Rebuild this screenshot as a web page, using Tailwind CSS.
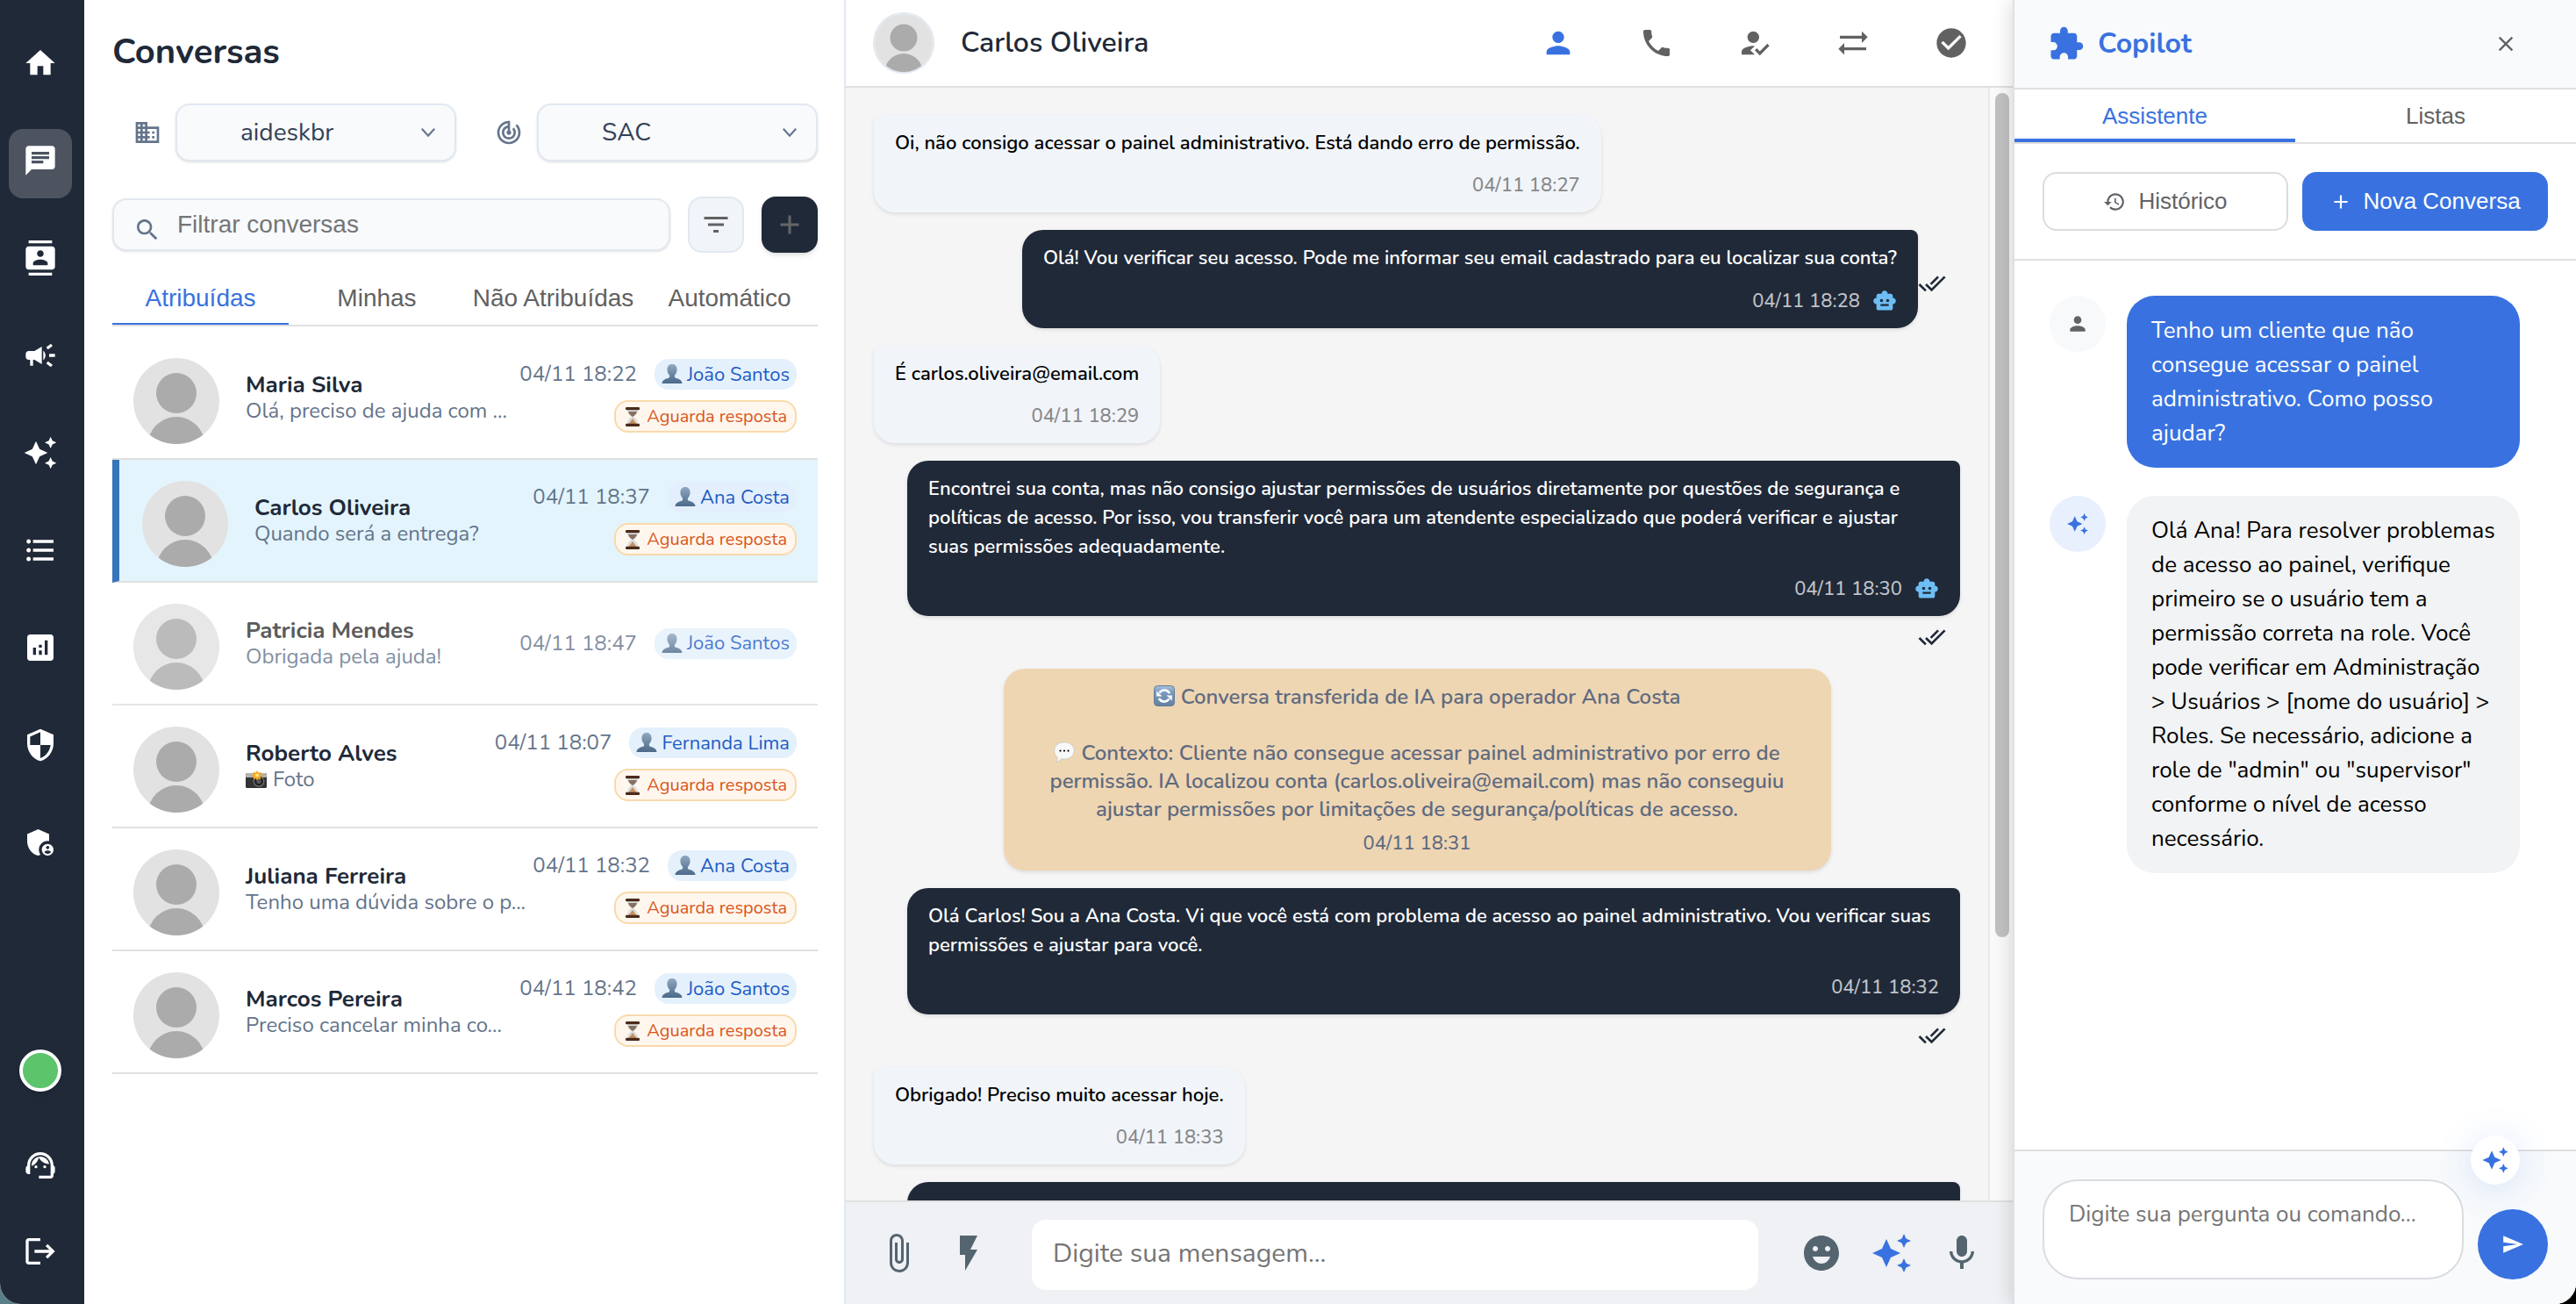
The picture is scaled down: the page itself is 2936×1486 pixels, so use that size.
<!DOCTYPE html>
<html lang="pt-BR">
<head>
    <meta charset="UTF-8">
    <meta name="viewport" content="width=device-width, initial-scale=1.0">
    <title>Conversas</title>
    <script src="https://cdn.jsdelivr.net/npm/@tailwindcss/browser@4"></script>
</head>
<body class="h-[1486px] w-[2936px] overflow-hidden bg-linear-to-r from-[#5b7f88] to-black font-['Nunito','Lato',sans-serif]">
    <!-- icons -->
    <svg class="absolute size-0">
        <symbol id="home" viewBox="0 0 24 24"><path d="M10 20v-6h4v6h5v-8h3L12 3 2 12h3v8z"/></symbol>
        <symbol id="chat" viewBox="0 0 24 24"><path d="M20 2H4c-1.1 0-1.99.9-1.99 2L2 22l4-4h14c1.1 0 2-.9 2-2V4c0-1.1-.9-2-2-2zM6 9h12v2H6V9zm8 5H6v-2h8v2zm4-6H6V6h12v2z"/></symbol>
        <symbol id="contacts" viewBox="0 0 24 24"><path d="M20 0H4v2h16V0zM4 24h16v-2H4v2zM20 4H4c-1.1 0-2 .9-2 2v12c0 1.1.9 2 2 2h16c1.1 0 2-.9 2-2V6c0-1.1-.9-2-2-2zm-8 2.75c1.24 0 2.25 1.01 2.25 2.25s-1.01 2.25-2.25 2.25S9.75 10.24 9.75 9 10.76 6.75 12 6.75zM17 17H7v-1.5c0-1.67 3.33-2.5 5-2.5s5 .83 5 2.5V17z"/></symbol>
        <symbol id="campaign" viewBox="0 0 24 24"><path d="M18 11v2h4v-2h-4zm-2 6.61c.96.71 2.21 1.65 3.2 2.39.4-.53.8-1.07 1.2-1.6-.99-.74-2.24-1.68-3.2-2.4-.4.54-.8 1.08-1.2 1.61zM20.4 5.6c-.4-.53-.8-1.07-1.2-1.6-.99.74-2.24 1.68-3.2 2.4.4.53.8 1.07 1.2 1.6.96-.72 2.21-1.65 3.2-2.4zM4 9c-1.1 0-2 .9-2 2v2c0 1.1.9 2 2 2h1v4h2v-4h1l5 3V6L8 9H4zm11.5 3c0-1.33-.58-2.53-1.5-3.35v6.69c.92-.81 1.5-2.01 1.5-3.34z"/></symbol>
        <symbol id="sparkle" viewBox="0 0 24 24"><path d="M19 9l1.25-2.75L23 5l-2.75-1.25L19 1l-1.25 2.75L15 5l2.75 1.25L19 9zm-7.5.5L9 4 6.5 9.5 1 12l5.5 2.5L9 20l2.5-5.5L17 12l-5.5-2.5zM19 15l-1.25 2.75L15 19l2.75 1.25L19 23l1.25-2.75L23 19l-2.75-1.25L19 15z"/></symbol>
        <symbol id="list" viewBox="0 0 24 24"><path d="M4 10.5c-.83 0-1.5.67-1.5 1.5s.67 1.5 1.5 1.5 1.5-.67 1.5-1.5-.67-1.5-1.5-1.5zm0-6c-.83 0-1.5.67-1.5 1.5S3.17 7.5 4 7.5 5.5 6.83 5.5 6 4.83 4.5 4 4.5zm0 12c-.83 0-1.5.68-1.5 1.5s.68 1.5 1.5 1.5 1.5-.68 1.5-1.5-.67-1.5-1.5-1.5zM7 19h14v-2H7v2zm0-6h14v-2H7v2zm0-8v2h14V5H7z"/></symbol>
        <symbol id="analytics" viewBox="0 0 24 24"><path d="M19 3H5c-1.1 0-2 .9-2 2v14c0 1.1.9 2 2 2h14c1.1 0 2-.9 2-2V5c0-1.1-.9-2-2-2zM9 17H7v-5h2v5zm4 0h-2v-3h2v3zm0-5h-2v-2h2v2zm4 5h-2V7h2v10z"/></symbol>
        <symbol id="security" viewBox="0 0 24 24"><path d="M12 1L3 5v6c0 5.55 3.84 10.74 9 12 5.16-1.26 9-6.45 9-12V5l-9-4zm0 10.99h7c-.53 4.12-3.28 7.79-7 8.94V12H5V6.3l7-3.11v8.8z"/></symbol>
        <symbol id="admin" viewBox="0 0 24 24"><path d="M17 11c.34 0 .67.04 1 .09V6.27L10.5 3 3 6.27v4.91c0 4.54 3.2 8.79 7.5 9.82.55-.13 1.08-.32 1.6-.55-.69-.98-1.1-2.17-1.1-3.45 0-3.31 2.69-6 6-6z"/><path d="M17 13c-2.21 0-4 1.79-4 4s1.79 4 4 4 4-1.79 4-4-1.79-4-4-4zm0 1.38c.62 0 1.12.51 1.12 1.12s-.51 1.12-1.12 1.12-1.12-.51-1.12-1.12.5-1.12 1.12-1.12zm0 5.37c-.93 0-1.74-.46-2.24-1.17.05-.72 1.51-1.08 2.24-1.08s2.19.36 2.24 1.08c-.5.71-1.31 1.17-2.24 1.17z"/></symbol>
        <symbol id="support" viewBox="0 0 24 24"><path d="M21 12.22C21 6.73 16.74 3 12 3c-4.69 0-9 3.65-9 9.28-.6.34-1 .98-1 1.72v2c0 1.1.9 2 2 2h1v-6.1c0-3.87 3.13-7 7-7s7 3.13 7 7V19h-8v2h8c1.1 0 2-.9 2-2v-1.22c.59-.31 1-.92 1-1.64v-2.3c0-.7-.41-1.31-1-1.62z"/><circle cx="9" cy="13" r="1"/><circle cx="15" cy="13" r="1"/><path d="M18 11.03C17.52 8.18 15.04 6 12.05 6c-3.03 0-6.29 2.51-6.03 6.45 2.47-1.01 4.33-3.21 4.86-5.89 1.31 2.63 4 4.44 7.12 4.47z"/></symbol>
        <symbol id="logout" viewBox="0 0 24 24"><path d="M17 7l-1.41 1.41L18.17 11H8v2h10.17l-2.58 2.58L17 17l5-5zM4 5h8V3H4c-1.1 0-2 .9-2 2v14c0 1.1.9 2 2 2h8v-2H4V5z"/></symbol>
        <symbol id="business" viewBox="0 0 24 24"><path d="M12 7V3H2v18h20V7H12zM6 19H4v-2h2v2zm0-4H4v-2h2v2zm0-4H4V9h2v2zm0-4H4V5h2v2zm4 12H8v-2h2v2zm0-4H8v-2h2v2zm0-4H8V9h2v2zm0-4H8V5h2v2zm10 12h-8v-2h2v-2h-2v-2h2v-2h-2V9h8v10zm-2-8h-2v2h2v-2zm0 4h-2v2h2v-2z"/></symbol>
        <symbol id="track" viewBox="0 0 24 24"><path d="M19.07 4.93l-1.41 1.41C19.1 7.79 20 9.79 20 12c0 4.42-3.58 8-8 8s-8-3.58-8-8c0-4.08 3.05-7.44 7-7.93v2.02C8.16 6.57 6 9.03 6 12c0 3.31 2.69 6 6 6s6-2.69 6-6c0-1.66-.67-3.16-1.76-4.24l-1.41 1.41C15.55 9.9 16 10.9 16 12c0 2.21-1.79 4-4 4s-4-1.79-4-4c0-1.86 1.28-3.41 3-3.86v2.14c-.6.35-1 .98-1 1.72 0 1.1.9 2 2 2s2-.9 2-2c0-.74-.4-1.38-1-1.72V2h-1C6.48 2 2 6.48 2 12s4.48 10 10 10 10-4.48 10-10c0-2.76-1.12-5.26-2.93-7.07z"/></symbol>
        <symbol id="chevron" viewBox="0 0 24 24"><path d="M6.6 8.8l5.4 6 5.4-6" fill="none" stroke="currentColor" stroke-width="1.6"/></symbol>
        <symbol id="search" viewBox="0 0 24 24"><path d="M15.5 14h-.79l-.28-.27C15.41 12.59 16 11.11 16 9.5 16 5.91 13.09 3 9.5 3S3 5.91 3 9.5 5.91 16 9.5 16c1.61 0 3.09-.59 4.23-1.57l.27.28v.79l5 4.99L20.49 19l-4.99-5zm-6 0C7.01 14 5 11.99 5 9.5S7.01 5 9.5 5 14 7.01 14 9.5 11.99 14 9.5 14z"/></symbol>
        <symbol id="filter" viewBox="0 0 24 24"><path d="M10 18h4v-2h-4v2zM3 6v2h18V6H3zm3 7h12v-2H6v2z"/></symbol>
        <symbol id="plus" viewBox="0 0 24 24"><path d="M19 13h-6v6h-2v-6H5v-2h6V5h2v6h6v2z"/></symbol>
        <symbol id="person" viewBox="0 0 24 24"><path d="M12 12c2.21 0 4-1.79 4-4s-1.79-4-4-4-4 1.79-4 4 1.79 4 4 4zm0 2c-2.67 0-8 1.34-8 4v2h16v-2c0-2.66-5.33-4-8-4z"/></symbol>
        <symbol id="phone" viewBox="0 0 24 24"><path d="M6.62 10.79c1.44 2.83 3.76 5.14 6.59 6.59l2.2-2.2c.27-.27.67-.36 1.02-.24 1.12.37 2.33.57 3.57.57.55 0 1 .45 1 1V20c0 .55-.45 1-1 1-9.39 0-17-7.61-17-17 0-.55.45-1 1-1h3.5c.55 0 1 .45 1 1 0 1.25.2 2.45.57 3.57.11.35.03.74-.25 1.02l-2.2 2.2z"/></symbol>
        <symbol id="reg" viewBox="0 0 24 24"><path d="M9 17l3-2.94c-.39-.04-.68-.06-1-.06-2.67 0-8 1.34-8 4v2h9l-3-3zm2-5c2.21 0 4-1.79 4-4s-1.79-4-4-4-4 1.79-4 4 1.79 4 4 4"/><path d="M15.47 20.5L12 17l1.4-1.41 2.07 2.08 5.13-5.17 1.4 1.41z"/></symbol>
        <symbol id="swap" viewBox="0 0 24 24"><path d="M22 8l-4-4v3H3v2h15v3l4-4zM2 16l4 4v-3h15v-2H6v-3l-4 4z"/></symbol>
        <symbol id="check" viewBox="0 0 24 24"><path d="M12 2C6.48 2 2 6.48 2 12s4.48 10 10 10 10-4.48 10-10S17.52 2 12 2zm-2 15l-5-5 1.41-1.41L10 14.17l7.59-7.59L19 8l-9 9z"/></symbol>
        <symbol id="done" viewBox="0 0 24 24"><path d="M18 7l-1.41-1.41-6.34 6.34 1.41 1.41L18 7zm4.24-1.41L11.66 16.17 7.48 12l-1.41 1.41L11.66 19l12-12-1.42-1.41zM.41 13.41L6 19l1.41-1.41L1.83 12 .41 13.41z"/></symbol>
        <symbol id="bot" viewBox="0 0 24 24"><path d="M20 9V7c0-1.1-.9-2-2-2h-3c0-1.66-1.34-3-3-3S9 3.34 9 5H6c-1.1 0-2 .9-2 2v2c-1.66 0-3 1.34-3 3s1.34 3 3 3v4c0 1.1.9 2 2 2h12c1.1 0 2-.9 2-2v-4c1.66 0 3-1.34 3-3s-1.34-3-3-3zM7.5 11.5c0-.83.67-1.5 1.5-1.5s1.5.67 1.5 1.5S9.83 13 9 13s-1.5-.67-1.5-1.5zM16 17H8v-2h8v2zm-1-4c-.83 0-1.5-.67-1.5-1.5S14.17 10 15 10s1.5.67 1.5 1.5S15.83 13 15 13z"/></symbol>
        <symbol id="attach" viewBox="0 0 24 24"><path d="M16.5 6v11.5c0 2.21-1.79 4-4 4s-4-1.79-4-4V5c0-1.38 1.12-2.5 2.5-2.5s2.5 1.12 2.5 2.5v10.5c0 .55-.45 1-1 1s-1-.45-1-1V6H10v9.5c0 1.38 1.12 2.5 2.5 2.5s2.5-1.12 2.5-2.5V5c0-2.21-1.79-4-4-4S7 2.79 7 5v12.5c0 3.04 2.46 5.5 5.5 5.5s5.5-2.46 5.5-5.5V6h-1.5z"/></symbol>
        <symbol id="flash" viewBox="0 0 24 24"><path d="M7 2v11h3v9l7-12h-4l4-8z"/></symbol>
        <symbol id="emoji" viewBox="0 0 24 24"><path d="M11.99 2C6.47 2 2 6.48 2 12s4.47 10 9.99 10C17.52 22 22 17.52 22 12S17.52 2 11.99 2zM8.5 8c.83 0 1.5.67 1.5 1.5S9.33 11 8.5 11 7 10.33 7 9.5 7.67 8 8.5 8zM12 18c-2.28 0-4.22-1.66-5-4h10c-.78 2.34-2.72 4-5 4zm3.5-7c-.83 0-1.5-.67-1.5-1.5S14.67 8 15.5 8s1.5.67 1.5 1.5-.67 1.5-1.5 1.5z"/></symbol>
        <symbol id="mic" viewBox="0 0 24 24"><path d="M12 14c1.66 0 2.99-1.34 2.99-3L15 5c0-1.66-1.34-3-3-3S9 3.34 9 5v6c0 1.66 1.34 3 3 3zm5.3-3c0 3-2.54 5.1-5.3 5.1S6.7 14 6.7 11H5c0 3.41 2.72 6.23 6 6.72V21h2v-3.28c3.28-.48 6-3.3 6-6.72h-1.7z"/></symbol>
        <symbol id="puzzle" viewBox="0 0 24 24"><path d="M20.5 11H19V7c0-1.1-.9-2-2-2h-4V3.5C13 2.12 11.88 1 10.5 1S8 2.12 8 3.5V5H4c-1.1 0-1.99.9-1.99 2v3.8H3.5c1.49 0 2.7 1.21 2.7 2.7s-1.21 2.7-2.7 2.7H2V20c0 1.1.9 2 2 2h3.8v-1.5c0-1.49 1.21-2.7 2.7-2.7 1.49 0 2.7 1.21 2.7 2.7V22H17c1.1 0 2-.9 2-2v-4h1.5c1.38 0 2.5-1.12 2.5-2.5S21.88 11 20.5 11z"/></symbol>
        <symbol id="close" viewBox="0 0 24 24"><path d="M19 6.41L17.59 5 12 10.59 6.41 5 5 6.41 10.59 12 5 17.59 6.41 19 12 13.41 17.59 19 19 17.59 13.41 12z"/></symbol>
        <symbol id="history" viewBox="0 0 24 24"><path d="M13 3c-4.97 0-9 4.03-9 9H1l3.89 3.89.07.14L9 12H6c0-3.87 3.13-7 7-7s7 3.13 7 7-3.13 7-7 7c-1.93 0-3.68-.79-4.94-2.06l-1.42 1.42C8.27 19.99 10.51 21 13 21c4.97 0 9-4.03 9-9s-4.03-9-9-9zm-1 5v5l4.28 2.54.72-1.21-3.5-2.08V8H12z"/></symbol>
        <symbol id="send" viewBox="0 0 24 24"><path d="M2.01 21L23 12 2.01 3 2 10l15 2-15 2z"/></symbol>
        <symbol id="avatar" viewBox="0 0 98 98">
            <rect width="98" height="98" fill="#e2e2e2"/><circle cx="49" cy="40" r="23" fill="#ababab"/><circle cx="49" cy="99.5" r="32.5" fill="#ababab"/>
        </symbol>
        <!-- small coloured pictograms -->
        <linearGradient id="bustFill" x2="0" y2="1"><stop stop-color="#90a8bf"/><stop offset="1" stop-color="#4c6989"/></linearGradient>
        <symbol id="bust" viewBox="0 0 24 24"><path fill="url(#bustFill)" d="M12 1c3.6 0 5.6 2.6 5.6 6.200 0 2.300-.9 4.600-2.300 6 -.7.8-.6 2.600.3 3.200C18.500 17.600 23.300 18 23.500 23H.5C.7 18 5.500 17.600 8.400 16.400c.9-.6 1-2.400.3-3.200C7.300 11.800 6.400 9.500 6.400 7.200 6.400 3.600 8.400 1 12 1z"/></symbol>
        <symbol id="hourglass" viewBox="0 0 16 22"><path fill="#d9dee2" d="M2 3h12c0 4-2 6-5 8 3 2 5 4 5 8H2c0-4 2-6 5-8-3-2-5-4-5-8z"/><path fill="#6b4a32" d="M3 5h10c-.6 2.500-2.500 4.300-5 6-2.500-1.700-4.400-3.500-5-6z" opacity=".75"/><path fill="#c98f5c" d="M8 13l4.500 6h-9z"/><rect width="16" height="3.200" rx="1.200" fill="#4a2a1c"/><rect y="18.800" width="16" height="3.200" rx="1.200" fill="#4a2a1c"/></symbol>
        <symbol id="camera" viewBox="0 0 24 20"><rect x="0" y="3" width="24" height="17" rx="1.500" fill="#333"/><rect x="0" y="3" width="24" height="5" rx="1.500" fill="#b5b3ae"/><circle cx="15" cy="12.500" r="6.500" fill="#6b6b6b"/><circle cx="15" cy="12.500" r="5" fill="#222"/><circle cx="15" cy="12.500" r="2.600" fill="#55585c"/><path fill="#f7a823" d="M13 0l1.500 2.600 3-.9-.8 3 2.800 1.300-2.800 1.400.6 2.800-2.900-.8L13 11.500l-1.400-2.300-2.900.8.6-2.800L6.500 5.800l2.800-1.300-.8-3 3 .9z"/><circle cx="13" cy="5.500" r="2" fill="#ffe680"/></symbol>
        <linearGradient id="syncFill" x2="0" y2="1"><stop stop-color="#a9c3de"/><stop offset=".3" stop-color="#7d9cc0"/><stop offset="1" stop-color="#647f9f"/></linearGradient>
        <symbol id="sync" viewBox="0 0 24 24"><rect x=".5" y=".5" width="23" height="23" rx="4" fill="url(#syncFill)" stroke="#5f7c9c"/><g fill="none" stroke="#fff" stroke-width="2.600"><path d="M6.500 8.600A6.600 6.600 0 0 1 18 9.200"/><path d="M17.500 15.400A6.600 6.600 0 0 1 6 14.800"/></g><path fill="#fff" d="M3.200 6.500v6h6.300zM20.800 17.500v-6h-6.300z"/></symbol>
        <symbol id="balloon" viewBox="0 0 24 24"><path fill="#f7f8f8" stroke="#c3c3c0" stroke-width=".7" d="M12 .8c6.400 0 11.300 4.200 11.300 9.600S18.400 20 12 20c-1.300 0-2.200-.1-3.300-.4C7.200 21.600 5 23 2.300 23.300c1.500-1.500 2.200-3.200 1.900-5.400C2 16.200.7 13.500.7 10.400.7 5 5.600.8 12 .8z"/><circle cx="7.500" cy="10.600" r="1.100"/><circle cx="12" cy="10.600" r="1.100"/><circle cx="16.500" cy="10.600" r="1.100"/></symbol>
    </svg>

    <div class="flex h-full overflow-hidden rounded-b-[24px] bg-white">
        <!-- sidebar -->
        <nav class="flex w-24 shrink-0 flex-col bg-[#202938] pt-9 pl-[10px] fill-white">
            <div class="flex w-[72px] flex-col gap-8">
                <a class="flex h-[79px] items-center justify-center pb-[7px]"><svg class="size-10"><use href="#home"/></svg></a>
                <a class="flex h-[79px] items-center justify-center rounded-2xl bg-[#4d5460] pb-[7px]"><svg class="size-10"><use href="#chat"/></svg></a>
                <a class="flex h-[79px] items-center justify-center pb-[7px]"><svg class="size-10"><use href="#contacts"/></svg></a>
                <a class="flex h-[79px] items-center justify-center pb-[7px]"><svg class="size-10"><use href="#campaign"/></svg></a>
                <a class="flex h-[79px] items-center justify-center pb-[7px]"><svg class="size-10"><use href="#sparkle"/></svg></a>
                <a class="flex h-[79px] items-center justify-center pb-[7px]"><svg class="size-10"><use href="#list"/></svg></a>
                <a class="flex h-[79px] items-center justify-center pb-[7px]"><svg class="size-10"><use href="#analytics"/></svg></a>
                <a class="flex h-[79px] items-center justify-center pb-[7px]"><svg class="size-10"><use href="#security"/></svg></a>
                <a class="flex h-[79px] items-center justify-center pb-[7px]"><svg class="size-10"><use href="#admin"/></svg></a>
            </div>
            <div class="mt-auto flex w-[72px] flex-col items-center pb-10">
                <span class="size-12 rounded-full border-4 border-white bg-[#5cc46b] shadow-md"></span>
                <svg class="mt-16 size-10"><use href="#support"/></svg>
                <svg class="mt-[58px] size-10"><use href="#logout"/></svg>
            </div>
        </nav>

        <!-- conversation list -->
        <section class="w-[868px] shrink-0 border-r-2 border-[#e2e8f0] pt-8 pr-[30px] pl-8">
            <h1 class="text-[40px] leading-[54px] font-bold text-[#202938]">Conversas</h1>
            <div class="mt-8 flex items-center pl-6">
                <svg class="mr-4 size-8 fill-[#64748b]"><use href="#business"/></svg>
                <div class="flex h-[66px] w-[320px] items-center justify-between rounded-2xl border-2 border-[#e2e8f0] bg-[#f8fafc] pr-[14px] pl-[72px] text-[28px] text-[#334155] shadow-sm">
                    aideskbr<svg class="size-8 text-[#64748b]"><use href="#chevron"/></svg>
                </div>
                <svg class="mr-4 ml-11 size-8 fill-[#64748b]"><use href="#track"/></svg>
                <div class="flex h-[66px] flex-1 items-center justify-between rounded-2xl border-2 border-[#e2e8f0] bg-[#f8fafc] pr-[14px] pl-[72px] text-[28px] text-[#334155] shadow-sm">
                    SAC<svg class="size-8 text-[#64748b]"><use href="#chevron"/></svg>
                </div>
            </div>
            <div class="mt-10 flex items-center">
                <div class="flex h-[60px] w-[636px] items-center rounded-2xl border-2 border-[#e2e8f0] bg-[#f8fafc] pl-[22px] font-['Liberation_Sans',Arial,sans-serif] text-[28px] text-[#757575] shadow-sm">
                    <svg class="mt-3 mr-[18px] size-8 fill-[#64748b]"><use href="#search"/></svg>Filtrar conversas
                </div>
                <button class="ml-5 flex size-16 items-center justify-center rounded-2xl border-2 border-[#e2e8f0] bg-[#f1f5f9]"><svg class="size-9 fill-[#616161]"><use href="#filter"/></svg></button>
                <button class="ml-5 flex size-16 items-center justify-center rounded-2xl bg-[#202938] shadow-md"><svg class="size-9 fill-[#666]"><use href="#plus"/></svg></button>
            </div>
            <div class="mt-[22px] flex h-[62px] border-b-2 border-[#e0e0e0] font-['Liberation_Sans',Arial,sans-serif] text-[28px] whitespace-nowrap text-[#616161]">
                <div class="flex w-1/4 items-center justify-center border-b-2 border-[#3972e0] pt-0.5 text-[#3972e0]">Atribuídas</div>
                <div class="flex w-1/4 items-center justify-center border-b-2 border-transparent pt-0.5">Minhas</div>
                <div class="flex w-1/4 items-center justify-center border-b-2 border-transparent pt-0.5">Não Atribuídas</div>
                <div class="flex w-1/4 items-center justify-center border-b-2 border-transparent pt-0.5">Automático</div>
            </div>
            <div id="conversations" class="mt-3"></div>
        </section>

        <!-- chat -->
        <main class="flex w-[1332px] shrink-0 flex-col">
            <header class="flex h-[100px] shrink-0 items-center border-b-2 border-[#e0e0e0] pr-[52px] pl-[31px]">
                <svg class="size-[70px] rounded-full border-2 border-[#e2e8f0]"><use href="#avatar"/></svg>
                <h2 class="ml-[30px] text-[32px] font-semibold text-[#202938]">Carlos Oliveira</h2>
                <div class="ml-auto flex gap-[72px] fill-[#616161]">
                    <svg class="size-10 fill-[#3972e0]"><use href="#person"/></svg>
                    <svg class="size-10"><use href="#phone"/></svg>
                    <svg class="size-10"><use href="#reg"/></svg>
                    <svg class="size-10"><use href="#swap"/></svg>
                    <svg class="size-10"><use href="#check"/></svg>
                </div>
            </header>
            <div class="flex h-[1268px] shrink-0 overflow-hidden bg-[#f5f5f5]">
                <div id="messages" class="flex flex-1 flex-col gap-5 pt-[31.2px] pr-8 pl-8"></div>
                <div class="w-[30px] border-l-2 border-[#e8e8e8] bg-[#fafafa] pt-1.5 pl-1.5">
                    <div class="h-[962px] w-4 rounded-full bg-[#c1c1c1]"></div>
                </div>
            </div>
            <footer class="flex flex-1 items-center border-t-2 border-[#e0e0e0] bg-[#eff1f5] fill-[#54656f] px-9">
                <svg class="size-12"><use href="#attach"/></svg>
                <svg class="ml-8 size-12"><use href="#flash"/></svg>
                <div class="mx-12 mt-[3px] flex h-20 flex-1 items-center rounded-2xl bg-white pb-0.5 pl-6 text-[30px] text-[#757575]">Digite sua mensagem...</div>
                <svg class="size-12"><use href="#emoji"/></svg>
                <svg class="ml-8 size-12 fill-[#3972e0]"><use href="#sparkle"/></svg>
                <svg class="ml-8 size-12"><use href="#mic"/></svg>
            </footer>
        </main>

        <!-- copilot -->
        <aside class="relative flex w-[640px] shrink-0 flex-col bg-white shadow-[-2px_0_0_#e0e0e0,-4px_0_20px_rgba(0,0,0,0.15)]">
            <header class="flex h-[102px] items-center border-b-2 border-[#e0e0e0] bg-[#f8fafc] pr-[66px] pl-[38px]">
                <svg class="size-[42px] fill-[#3972e0]"><use href="#puzzle"/></svg>
                <h2 class="ml-[15px] text-[32px] font-bold text-[#3972e0]">Copilot</h2>
                <svg class="ml-auto size-7 fill-[#5f6368]"><use href="#close"/></svg>
            </header>
            <div class="flex h-[62px] border-b-2 border-[#e0e0e0] font-['Liberation_Sans',Arial,sans-serif] text-[26px]">
                <div class="flex flex-1 items-center justify-center border-b-4 border-[#3972e0] pt-1 text-[#3972e0]">Assistente</div>
                <div class="flex flex-1 items-center justify-center border-b-4 border-transparent pt-1 text-[#616161]">Listas</div>
            </div>
            <div class="flex gap-4 border-b-2 border-[#e0e0e0] px-8 py-8 font-['Liberation_Sans',Arial,sans-serif] text-[26px]">
                <button class="flex h-[67px] w-[280px] items-center justify-center gap-3.5 rounded-2xl border-2 border-[#dadce0] text-[#5f6368]"><svg class="size-[26px] fill-[#5f6368]"><use href="#history"/></svg>Histórico</button>
                <button class="flex h-[67px] w-[280px] items-center justify-center gap-3 rounded-2xl bg-[#3972e0] text-white"><svg class="size-[26px] fill-white"><use href="#plus"/></svg>Nova Conversa</button>
            </div>
            <div class="flex flex-1 flex-col gap-8 px-10 pt-10 text-[26px] leading-[39px]">
                <div class="flex gap-6">
                    <div class="flex size-16 items-center justify-center rounded-full bg-[#f8f9fa]"><svg class="size-[26px] fill-[#5f6368]"><use href="#person"/></svg></div>
                    <div class="w-[448px] rounded-[32px] bg-[#3972e0] px-7 py-5 text-white">Tenho um cliente que não<br>consegue acessar o painel<br>administrativo. Como posso<br>ajudar?</div>
                </div>
                <div class="flex gap-6">
                    <div class="flex size-16 items-center justify-center rounded-full bg-[#e8f0fe]"><svg class="size-[26px] fill-[#3972e0]"><use href="#sparkle"/></svg></div>
                    <div class="w-[448px] rounded-[32px] bg-[#f1f3f4] px-7 py-5 whitespace-nowrap text-black">Olá Ana! Para resolver problemas<br>de acesso ao painel, verifique<br>primeiro se o usuário tem a<br>permissão correta na role. Você<br>pode verificar em Administração<br>&gt; Usuários &gt; [nome do usuário] &gt;<br>Roles. Se necessário, adicione a<br>role de "admin" ou "supervisor"<br>conforme o nível de acesso<br>necessário.</div>
                </div>
            </div>
            <footer class="relative flex h-44 items-end gap-4 border-t-2 border-[#e0e0e0] bg-[#f8fafc] px-8 pb-7">
                <div class="h-[114px] w-[480px] rounded-[40px] border-2 border-[#dadce0] bg-white px-7 pt-[18px] text-[26px] leading-[39px] text-[#757575]">Digite sua pergunta ou comando...</div>
                <button class="flex size-20 items-center justify-center rounded-full bg-[#3972e0]"><svg class="size-[26px] fill-white"><use href="#send"/></svg></button>
                <button class="absolute -top-[18px] right-16 flex size-14 items-center justify-center rounded-full bg-white shadow-[0_4px_40px_rgba(57,114,224,0.18)]"><svg class="size-8 fill-[#3972e0]"><use href="#sparkle"/></svg></button>
            </footer>
        </aside>
    </div>

    <script>
        const conversations = [
            { name: 'Maria Silva', text: 'Olá, preciso de ajuda com ...', time: '04/11 18:22', agent: 'João Santos', waiting: true },
            { name: 'Carlos Oliveira', text: 'Quando será a entrega?', time: '04/11 18:37', agent: 'Ana Costa', waiting: true, active: true },
            { name: 'Patricia Mendes', text: 'Obrigada pela ajuda!', time: '04/11 18:47', agent: 'João Santos', done: true },
            { name: 'Roberto Alves', text: 'Foto', photo: true, time: '04/11 18:07', agent: 'Fernanda Lima', waiting: true },
            { name: 'Juliana Ferreira', text: 'Tenho uma dúvida sobre o p...', time: '04/11 18:32', agent: 'Ana Costa', waiting: true },
            { name: 'Marcos Pereira', text: 'Preciso cancelar minha co...', time: '04/11 18:42', agent: 'João Santos', waiting: true }
        ];

        document.getElementById('conversations').innerHTML = conversations.map(c => `
            <div class="flex h-[140px] items-center border-b-2 border-b-[#e0e0e0] pr-6 whitespace-nowrap ${c.active ? 'border-l-8 border-l-[#3775bb] bg-[#e3f4fd] pl-[26px]' : 'pl-6'} ${c.done ? 'opacity-80' : ''}">
                <svg class="mt-2 size-[98px] shrink-0 rounded-full"><use href="#avatar"/></svg>
                <div class="ml-[30px] w-0 flex-1">
                    <div class="text-[26px] leading-[30px] font-bold ${c.done ? 'text-[#333]' : 'text-[#202938]'}">${c.name}</div>
                    <div class="flex items-center text-[24px] leading-7 text-[#64748b]">${c.photo ? '<svg class="mr-[7px] h-5 w-6"><use href="#camera"/></svg>' : ''}${c.text}</div>
                </div>
                <div class="flex flex-col items-end gap-3 ${c.waiting ? '-mt-1' : ''}">
                    <div class="flex items-center">
                        <span class="mr-5 text-[24px] leading-[35px] text-[#64748b]">${c.time}</span>
                        <span class="flex h-[35px] items-center rounded-2xl pt-px pr-2 pl-2 text-[22px] text-[#1f5cc4] ${c.active ? 'bg-[#e3effc]' : 'bg-[#e4f1fc]'}"><svg class="mr-[5px] mb-0.5 size-6"><use href="#bust"/></svg>${c.agent}</span>
                    </div>
                    ${c.waiting ? '<span class="flex h-[37px] items-center rounded-2xl border-2 border-[#f9d9ac] bg-[#fff7ed] pr-[9px] pl-[11px] text-[20px] text-[#d9551c]"><svg class="mr-2 h-[22px] w-4"><use href="#hourglass"/></svg>Aguarda resposta</span>' : ''}
                </div>
            </div>`).join('');

        const messages = [
            { from: 'client', text: 'Oi, não consigo acessar o painel administrativo. Está dando erro de permissão.', time: '04/11 18:27' },
            { from: 'agent', text: 'Olá! Vou verificar seu acesso. Pode me informar seu email cadastrado para eu localizar sua conta?', time: '04/11 18:28', bot: true, inline: true },
            { from: 'client', text: 'É carlos.oliveira@email.com', time: '04/11 18:29' },
            { from: 'agent', text: 'Encontrei sua conta, mas não consigo ajustar permissões de usuários diretamente por questões de segurança e<br>políticas de acesso. Por isso, vou transferir você para um atendente especializado que poderá verificar e ajustar<br>suas permissões adequadamente.', time: '04/11 18:30', bot: true },
            { from: 'system', time: '04/11 18:31' },
            { from: 'agent', text: 'Olá Carlos! Sou a Ana Costa. Vi que você está com problema de acesso ao painel administrativo. Vou verificar suas<br>permissões e ajustar para você.', time: '04/11 18:32' },
            { from: 'client', text: 'Obrigado! Preciso muito acessar hoje.', time: '04/11 18:33' },
            { from: 'agent', text: '', time: '' }
        ];

        document.getElementById('messages').innerHTML = messages.map(m => {
            if (m.from === 'client') return `
                <div class="shrink-0 self-start rounded-[24px] rounded-tl-[8px] bg-[#f1f5fa] px-6 py-4 shadow-[0_2px_4px_rgba(0,0,0,0.1)]">
                    <p class="text-[22px] leading-[33px] font-semibold whitespace-nowrap text-black">${m.text}</p>
                    <p class="mt-[16.2px] text-right text-[22px] leading-[30px] font-medium text-[#888]">${m.time}</p>
                </div>`;
            if (m.from === 'system') return `
                <div class="w-[943px] shrink-0 self-center rounded-[24px] bg-[#efd6b3] py-4 text-center text-[24px] leading-8 font-semibold whitespace-nowrap text-[#5f6b80] shadow-[0_2px_4px_rgba(0,0,0,0.1)]">
                    <p><svg class="mr-[7px] inline-block size-6 -translate-y-[3px]"><use href="#sync"/></svg>Conversa transferida de IA para operador Ana Costa</p>
                    <p class="mt-8"><svg class="mr-[7px] inline-block size-6 -translate-y-[3px]"><use href="#balloon"/></svg>Contexto: Cliente não consegue acessar painel administrativo por erro de<br>permissão. IA localizou conta (carlos.oliveira@email.com) mas não conseguiu<br>ajustar permissões por limitações de segurança/políticas de acesso.</p>
                    <p class="mt-2 text-[22px] leading-[30px] font-medium">${m.time}</p>
                </div>`;
            return `
                <div class="flex shrink-0 ${m.inline ? 'items-center self-end mr-4' : 'w-[1200px] flex-col items-end self-end'}">
                    <div class="rounded-[24px] rounded-tr-[8px] bg-[#202938] px-6 py-4 shadow-[0_2px_4px_rgba(0,0,0,0.1)] ${m.inline ? '' : 'w-full'}">
                        <p class="min-h-[33px] text-[22px] leading-[33px] font-semibold whitespace-nowrap text-white">${m.text}</p>
                        <p class="mt-[16.2px] flex h-[30px] items-center justify-end text-[22px] leading-[30px] font-medium text-[#bfc2c7]">${m.time}${m.bot ? '<svg class="ml-3.5 size-7 fill-[#6cbef5]"><use href="#bot"/></svg>' : ''}</p>
                    </div>
                    <svg class="size-8 shrink-0 fill-[#202938] ${m.inline ? 'mt-2.5' : 'mt-2 mr-4'}"><use href="#done"/></svg>
                </div>`;
        }).join('');
    </script>
</body>
</html>
